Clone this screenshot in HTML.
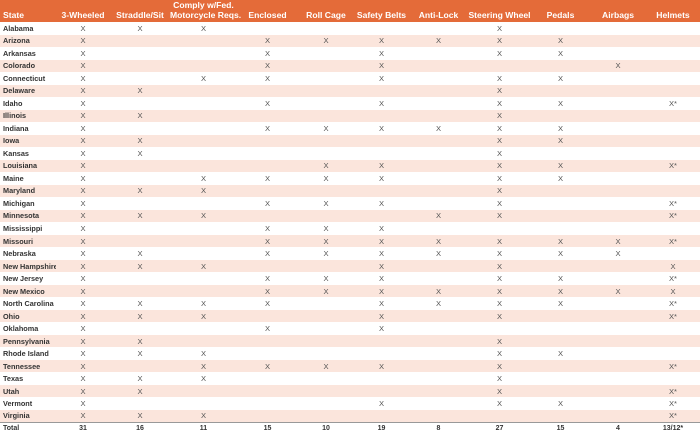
<!DOCTYPE html>
<html><head><meta charset="utf-8"><style>
body{margin:0;width:700px;height:434px;background:#fff;overflow:hidden;font-family:"Liberation Sans",Arial,sans-serif}
table{border-collapse:collapse;table-layout:fixed;width:700px}
th{background:#e46b39;color:#fff;font-size:8.6px;font-weight:bold;height:22px;box-sizing:border-box;padding:0 0 2px 0;vertical-align:bottom;line-height:9.5px;white-space:nowrap;text-align:center}
th:first-child{text-align:left;padding-left:3px}
tbody tr{height:12.52px}
td{height:12.52px;box-sizing:border-box;padding:0;font-size:7.6px;color:#555;text-align:center;line-height:11px;white-space:nowrap;overflow:hidden}
td:first-child{text-align:left;padding-left:3px;font-weight:bold;color:#333;font-size:7.3px}
tbody tr:nth-child(even) td{background:#fbe5dc}
tr.tot{height:12px}
tr.tot td{border-top:1px solid #999;font-weight:bold;color:#333;font-size:7px;height:12px;line-height:11px;background:#fff!important}
</style></head><body>
<table>
<colgroup><col style="width:56px"><col style="width:54px"><col style="width:60px"><col style="width:67px"><col style="width:61px"><col style="width:56px"><col style="width:55px"><col style="width:59px"><col style="width:63px"><col style="width:59px"><col style="width:56px"><col style="width:54px"></colgroup>
<thead><tr><th>State</th><th>3-Wheeled</th><th>Straddle/Sit</th><th>Comply w/Fed.<br>Motorcycle Reqs.</th><th>Enclosed</th><th>Roll Cage</th><th>Safety Belts</th><th>Anti-Lock</th><th>Steering Wheel</th><th>Pedals</th><th>Airbags</th><th>Helmets</th></tr></thead>
<tbody>
<tr><td>Alabama</td><td>X</td><td>X</td><td>X</td><td></td><td></td><td></td><td></td><td>X</td><td></td><td></td><td></td></tr>
<tr><td>Arizona</td><td>X</td><td></td><td></td><td>X</td><td>X</td><td>X</td><td>X</td><td>X</td><td>X</td><td></td><td></td></tr>
<tr><td>Arkansas</td><td>X</td><td></td><td></td><td>X</td><td></td><td>X</td><td></td><td>X</td><td>X</td><td></td><td></td></tr>
<tr><td>Colorado</td><td>X</td><td></td><td></td><td>X</td><td></td><td>X</td><td></td><td></td><td></td><td>X</td><td></td></tr>
<tr><td>Connecticut</td><td>X</td><td></td><td>X</td><td>X</td><td></td><td>X</td><td></td><td>X</td><td>X</td><td></td><td></td></tr>
<tr><td>Delaware</td><td>X</td><td>X</td><td></td><td></td><td></td><td></td><td></td><td>X</td><td></td><td></td><td></td></tr>
<tr><td>Idaho</td><td>X</td><td></td><td></td><td>X</td><td></td><td>X</td><td></td><td>X</td><td>X</td><td></td><td>X*</td></tr>
<tr><td>Illinois</td><td>X</td><td>X</td><td></td><td></td><td></td><td></td><td></td><td>X</td><td></td><td></td><td></td></tr>
<tr><td>Indiana</td><td>X</td><td></td><td></td><td>X</td><td>X</td><td>X</td><td>X</td><td>X</td><td>X</td><td></td><td></td></tr>
<tr><td>Iowa</td><td>X</td><td>X</td><td></td><td></td><td></td><td></td><td></td><td>X</td><td>X</td><td></td><td></td></tr>
<tr><td>Kansas</td><td>X</td><td>X</td><td></td><td></td><td></td><td></td><td></td><td>X</td><td></td><td></td><td></td></tr>
<tr><td>Louisiana</td><td>X</td><td></td><td></td><td></td><td>X</td><td>X</td><td></td><td>X</td><td>X</td><td></td><td>X*</td></tr>
<tr><td>Maine</td><td>X</td><td></td><td>X</td><td>X</td><td>X</td><td>X</td><td></td><td>X</td><td>X</td><td></td><td></td></tr>
<tr><td>Maryland</td><td>X</td><td>X</td><td>X</td><td></td><td></td><td></td><td></td><td>X</td><td></td><td></td><td></td></tr>
<tr><td>Michigan</td><td>X</td><td></td><td></td><td>X</td><td>X</td><td>X</td><td></td><td>X</td><td></td><td></td><td>X*</td></tr>
<tr><td>Minnesota</td><td>X</td><td>X</td><td>X</td><td></td><td></td><td></td><td>X</td><td>X</td><td></td><td></td><td>X*</td></tr>
<tr><td>Mississippi</td><td>X</td><td></td><td></td><td>X</td><td>X</td><td>X</td><td></td><td></td><td></td><td></td><td></td></tr>
<tr><td>Missouri</td><td>X</td><td></td><td></td><td>X</td><td>X</td><td>X</td><td>X</td><td>X</td><td>X</td><td>X</td><td>X*</td></tr>
<tr><td>Nebraska</td><td>X</td><td>X</td><td></td><td>X</td><td>X</td><td>X</td><td>X</td><td>X</td><td>X</td><td>X</td><td></td></tr>
<tr><td>New Hampshire</td><td>X</td><td>X</td><td>X</td><td></td><td></td><td>X</td><td></td><td>X</td><td></td><td></td><td>X</td></tr>
<tr><td>New Jersey</td><td>X</td><td></td><td></td><td>X</td><td>X</td><td>X</td><td></td><td>X</td><td>X</td><td></td><td>X*</td></tr>
<tr><td>New Mexico</td><td>X</td><td></td><td></td><td>X</td><td>X</td><td>X</td><td>X</td><td>X</td><td>X</td><td>X</td><td>X</td></tr>
<tr><td>North Carolina</td><td>X</td><td>X</td><td>X</td><td>X</td><td></td><td>X</td><td>X</td><td>X</td><td>X</td><td></td><td>X*</td></tr>
<tr><td>Ohio</td><td>X</td><td>X</td><td>X</td><td></td><td></td><td>X</td><td></td><td>X</td><td></td><td></td><td>X*</td></tr>
<tr><td>Oklahoma</td><td>X</td><td></td><td></td><td>X</td><td></td><td>X</td><td></td><td></td><td></td><td></td><td></td></tr>
<tr><td>Pennsylvania</td><td>X</td><td>X</td><td></td><td></td><td></td><td></td><td></td><td>X</td><td></td><td></td><td></td></tr>
<tr><td>Rhode Island</td><td>X</td><td>X</td><td>X</td><td></td><td></td><td></td><td></td><td>X</td><td>X</td><td></td><td></td></tr>
<tr><td>Tennessee</td><td>X</td><td></td><td>X</td><td>X</td><td>X</td><td>X</td><td></td><td>X</td><td></td><td></td><td>X*</td></tr>
<tr><td>Texas</td><td>X</td><td>X</td><td>X</td><td></td><td></td><td></td><td></td><td>X</td><td></td><td></td><td></td></tr>
<tr><td>Utah</td><td>X</td><td>X</td><td></td><td></td><td></td><td></td><td></td><td>X</td><td></td><td></td><td>X*</td></tr>
<tr><td>Vermont</td><td>X</td><td></td><td></td><td></td><td></td><td>X</td><td></td><td>X</td><td>X</td><td></td><td>X*</td></tr>
<tr><td>Virginia</td><td>X</td><td>X</td><td>X</td><td></td><td></td><td></td><td></td><td></td><td></td><td></td><td>X*</td></tr>
<tr class="tot"><td>Total</td><td>31</td><td>16</td><td>11</td><td>15</td><td>10</td><td>19</td><td>8</td><td>27</td><td>15</td><td>4</td><td>13/12*</td></tr>
</tbody></table>
</body></html>
